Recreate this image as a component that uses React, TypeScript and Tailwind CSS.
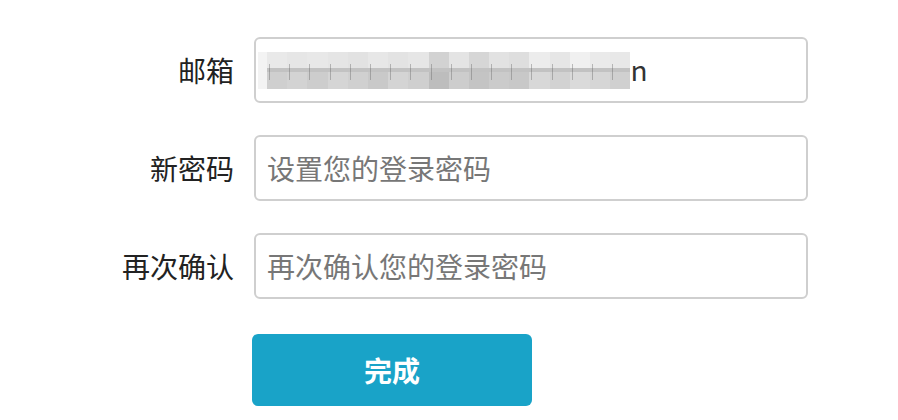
import React from "react";

const font = { fontFamily: '"Noto Sans CJK SC", "Noto Sans", sans-serif' };

const tops = ["#e9e9e9","#e6e6e6","#e8e8e8","#e5e5e5","#e2e2e2","#e7e7e7","#e3e3e3","#e6e6e6","#d2d2d2","#e4e4e4","#d6d6d6","#e2e2e2","#dedede","#ececec","#e6e6e6","#f0f0f0","#eaeaea","#e8e8e8"];
const bots = ["#cfcfcf","#d3d3d3","#cdcdcd","#d5d5d5","#d0d0d0","#c9c9c9","#d4d4d4","#cfcfcf","#bdbdbd","#cdcdcd","#c4c4c4","#cbcbcb","#c8c8c8","#d8d8d8","#d2d2d2","#dadada","#d6d6d6","#d0d0d0"];

function Blur() {
  return (
    <div className="flex items-center h-[37px]">
      <div className="w-[9px] h-[37px] bg-[#f3f3f3]" />
      {tops.map((t, i) => (
        <div key={i} className="relative w-[20.2px] h-[37px] flex flex-col">
          <div className="h-[16px]" style={{ background: t }} />
          <div className="h-[4px] bg-[#c2c2c2]" />
          <div className="flex-1" style={{ background: bots[i] }} />
          <div className="absolute left-[2px] top-[12px] w-px h-[16px] bg-[#666] opacity-40" />
        </div>
      ))}
    </div>
  );
}

function Row({ label, children }: { label: string; children: React.ReactNode }) {
  return (
    <div className="flex items-center">
      <div className="w-[254px] pr-[20px] text-right text-[28px] leading-none text-[#222]" style={font}>
        {label}
      </div>
      <div className="w-[554px] h-[66px] border-2 border-[#cfcfcf] rounded-[6px] flex items-center pl-[11px] text-[28px] text-[#777]" style={font}>
        {children}
      </div>
    </div>
  );
}

export default function App() {
  return (
    <div className="w-[898px] h-[420px] bg-white overflow-hidden pt-[37px]" style={font}>
      <div className="flex flex-col gap-[32px]">
        <Row label="邮箱">
          <div className="flex items-center -ml-[9px]">
            <Blur />
            <span className="text-[#333] leading-none -mt-[2px]">n</span>
          </div>
        </Row>
        <Row label="新密码">设置您的登录密码</Row>
        <Row label="再次确认">再次确认您的登录密码</Row>
      </div>
      <div className="pl-[252px] mt-[35px]">
        <button className="w-[280px] h-[72px] rounded-[6px] bg-[#19a3c8] text-white text-[28px] font-bold flex items-center justify-center" style={font}>
          完成
        </button>
      </div>
    </div>
  );
}
